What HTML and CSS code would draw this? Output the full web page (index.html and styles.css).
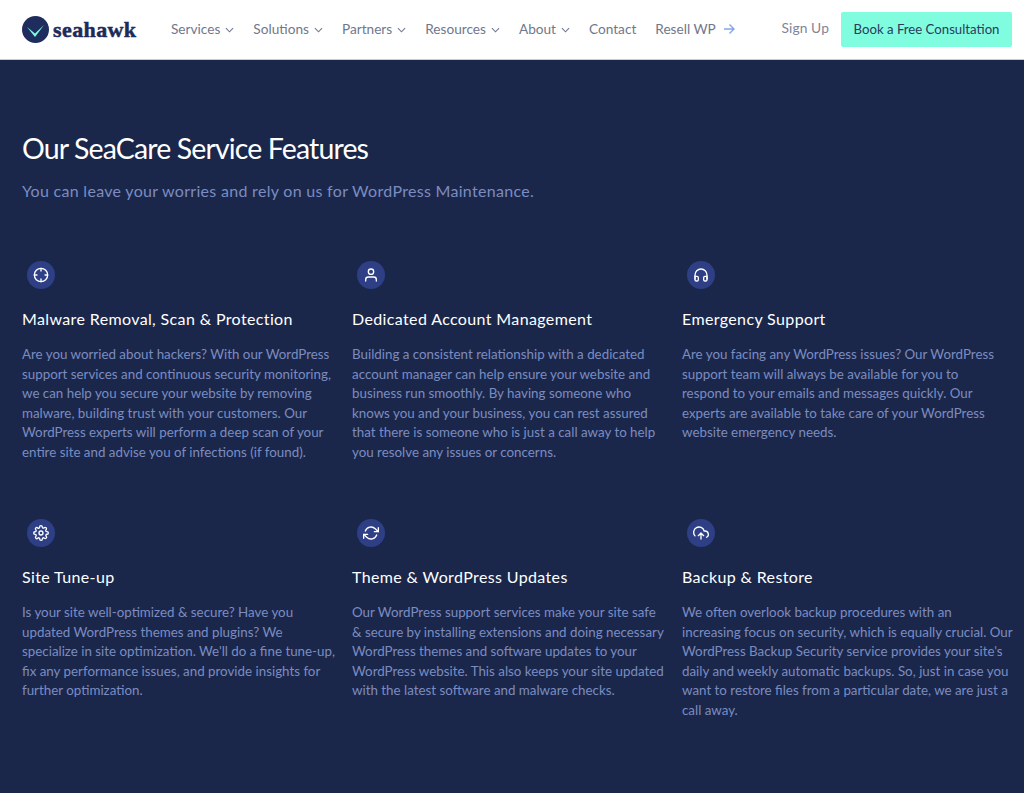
FILE: index.html
```html
<!DOCTYPE html>
<html lang="en">
<head>
<meta charset="utf-8">
<title>Seahawk</title>
<link rel="stylesheet" href="styles.css">
</head>
<body>
<header class="header">
  <a class="logo" href="#">
    <svg class="logo-mark" viewBox="0 0 27 27" width="27" height="27"><circle cx="13.5" cy="13.5" r="13.5" fill="#1f2d5e"/><path d="M5 11 L13 17.500 L22 9 L13 21 Z" fill="#7dfadf"/></svg>
    <span class="logo-text">seahawk</span>
  </a>
  <nav class="nav">
    <a class="nav-item" href="#">Services<svg class="chev" viewBox="0 0 10 6"><path d="M1 1l4 4 4-4"/></svg></a>
    <a class="nav-item" href="#">Solutions<svg class="chev" viewBox="0 0 10 6"><path d="M1 1l4 4 4-4"/></svg></a>
    <a class="nav-item" href="#">Partners<svg class="chev" viewBox="0 0 10 6"><path d="M1 1l4 4 4-4"/></svg></a>
    <a class="nav-item" href="#">Resources<svg class="chev" viewBox="0 0 10 6"><path d="M1 1l4 4 4-4"/></svg></a>
    <a class="nav-item" href="#">About<svg class="chev" viewBox="0 0 10 6"><path d="M1 1l4 4 4-4"/></svg></a>
    <a class="nav-item" href="#">Contact</a>
    <a class="nav-item" href="#">Resell WP<svg class="arrow" viewBox="0 0 12 12"><path d="M1 6h10M6.500 1.500L11 6l-4.500 4.500"/></svg></a>
  </nav>
  <div class="actions">
    <a class="signup" href="#">Sign Up</a>
    <a class="cta" href="#">Book a Free Consultation</a>
  </div>
</header>
<main class="main">
  <h1 class="title">Our SeaCare Service Features</h1>
  <p class="subtitle">You can leave your worries and rely on us for WordPress Maintenance.</p>
  <section class="grid">
    <article class="card">
      <div class="icon"><svg viewBox="0 0 24 24"><circle cx="12" cy="12" r="10"/><path d="M22 12h-4M6 12H2M12 6V2M12 22v-4"/></svg></div>
      <h2 class="card-title">Malware Removal, Scan &amp; Protection</h2>
      <p class="card-text">Are you worried about hackers? With our WordPress<br>support services and continuous security monitoring,<br>we can help you secure your website by removing<br>malware, building trust with your customers. Our<br>WordPress experts will perform a deep scan of your<br>entire site and advise you of infections (if found).</p>
    </article>
    <article class="card">
      <div class="icon"><svg viewBox="0 0 24 24"><path d="M20 21v-2a4 4 0 0 0-4-4H8a4 4 0 0 0-4 4v2"/><circle cx="12" cy="7" r="4"/></svg></div>
      <h2 class="card-title">Dedicated Account Management</h2>
      <p class="card-text">Building a consistent relationship with a dedicated<br>account manager can help ensure your website and<br>business run smoothly. By having someone who<br>knows you and your business, you can rest assured<br>that there is someone who is just a call away to help<br>you resolve any issues or concerns.</p>
    </article>
    <article class="card">
      <div class="icon"><svg viewBox="0 0 24 24"><path d="M3 18v-6a9 9 0 0 1 18 0v6"/><path d="M21 19a2 2 0 0 1-2 2h-1a2 2 0 0 1-2-2v-3a2 2 0 0 1 2-2h3zM3 19a2 2 0 0 0 2 2h1a2 2 0 0 0 2-2v-3a2 2 0 0 0-2-2H3z"/></svg></div>
      <h2 class="card-title">Emergency Support</h2>
      <p class="card-text">Are you facing any WordPress issues? Our WordPress<br>support team will always be available for you to<br>respond to your emails and messages quickly. Our<br>experts are available to take care of your WordPress<br>website emergency needs.</p>
    </article>
    <article class="card">
      <div class="icon"><svg viewBox="0 0 24 24"><circle cx="12" cy="12" r="3"/><path d="M19.4 15a1.65 1.65 0 0 0 .33 1.82l.06.06a2 2 0 0 1-2.83 2.83l-.06-.06a1.65 1.65 0 0 0-2.82 1.17V21a2 2 0 0 1-4 0v-.09A1.65 1.65 0 0 0 7.2 19.740l-.06.06a2 2 0 0 1-2.83-2.83l.06-.06a1.65 1.65 0 0 0-1.17-2.820H3a2 2 0 0 1 0-4h.09A1.65 1.65 0 0 0 4.260 7.200l-.06-.06a2 2 0 0 1 2.83-2.830l.06.06a1.65 1.65 0 0 0 2.820-1.170V3a2 2 0 0 1 4 0v.09a1.65 1.65 0 0 0 2.820 1.170l.06-.06a2 2 0 0 1 2.830 2.830l-.06.06a1.65 1.65 0 0 0 1.170 2.820H21a2 2 0 0 1 0 4h-.09a1.65 1.65 0 0 0-1.510 1z"/></svg></div>
      <h2 class="card-title">Site Tune-up</h2>
      <p class="card-text">Is your site well-optimized &amp; secure? Have you<br>updated WordPress themes and plugins? We<br>specialize in site optimization. We'll do a fine tune-up,<br>fix any performance issues, and provide insights for<br>further optimization.</p>
    </article>
    <article class="card">
      <div class="icon"><svg viewBox="0 0 24 24"><path d="M23 4v6h-6M1 20v-6h6"/><path d="M3.510 9a9 9 0 0 1 14.850-3.360L23 10M1 14l4.640 4.360A9 9 0 0 0 20.490 15"/></svg></div>
      <h2 class="card-title">Theme &amp; WordPress Updates</h2>
      <p class="card-text">Our WordPress support services make your site safe<br>&amp; secure by installing extensions and doing necessary<br>WordPress themes and software updates to your<br>WordPress website. This also keeps your site updated<br>with the latest software and malware checks.</p>
    </article>
    <article class="card">
      <div class="icon"><svg viewBox="0 0 24 24"><path d="M16 16l-4-4-4 4M12 12v9"/><path d="M20.390 18.390A5 5 0 0 0 18 9h-1.260A8 8 0 1 0 3 16.300"/></svg></div>
      <h2 class="card-title">Backup &amp; Restore</h2>
      <p class="card-text">We often overlook backup procedures with an<br>increasing focus on security, which is equally crucial. Our<br>WordPress Backup Security service provides your site's<br>daily and weekly automatic backups. So, just in case you<br>want to restore files from a particular date, we are just a<br>call away.</p>
    </article>
  </section>
</main>
</body>
</html>
```

FILE: styles.css
```css
* { box-sizing: border-box; }
html, body { margin: 0; padding: 0; }
body {
  width: 1024px;
  height: 793px;
  overflow: hidden;
  background: #1a274b;
  font-family: Lato, "Noto Sans", sans-serif;
}
a { text-decoration: none; color: inherit; }
.header {
  display: flex;
  align-items: center;
  height: 60px;
  padding: 0 12px 0 22px;
  background: #fff;
  border-bottom: 1px solid #c9ccd6;
}
.logo { display: flex; align-items: center; gap: 4px; width: 149px; flex: none; }
.logo-mark { flex: none; }
.logo-text {
  font-family: "Liberation Serif", serif;
  font-weight: 700;
  font-size: 22px;
  letter-spacing: 0.4px;
  color: #1c2b59;
  -webkit-text-stroke: 0.5px #1c2b59;
}
.nav { display: flex; align-items: center; gap: 19px; flex: 1; padding-bottom: 2px; font-size: 13.650px; color: #70778c; }
.nav-item { display: flex; align-items: center; gap: 5px; white-space: nowrap; }
.chev { width: 9px; height: 6px; margin-top: 2px; fill: none; stroke: #70778c; stroke-width: 1.2; }
.arrow { width: 12px; height: 12px; margin-left: 2px; fill: none; stroke: #85a5e5; stroke-width: 1.4; }
.actions { display: flex; align-items: center; gap: 12px; }
.signup { font-size: 13.800px; color: #7f8597; margin-top: -4px; letter-spacing: 0.1px; }
.cta {
  display: block;
  width: 171px;
  height: 35px;
  line-height: 35px;
  text-align: center;
  background: #80fcdf;
  border-radius: 2px;
  font-size: 13.200px;
  color: #2b3a5c;
  white-space: nowrap;
}
.main { padding: 69px 12px 0 22px; }
.title {
  margin: 0;
  font-size: 28.500px;
  line-height: 38px;
  font-weight: 400;
  letter-spacing: -0.870px;
  color: #fff;
}
.subtitle {
  margin: 12px 0 0;
  font-size: 16px;
  line-height: 24px;
  letter-spacing: 0.3px;
  color: #7c8cc0;
}
.grid {
  display: grid;
  grid-template-columns: repeat(3, 300px);
  column-gap: 30px;
  margin-top: 58px;
}
.card { height: 258px; }
.icon {
  width: 28px;
  height: 28px;
  margin-left: 5px;
  border-radius: 50%;
  background: #2e3f85;
  display: flex;
  align-items: center;
  justify-content: center;
}
.icon svg { width: 16px; height: 16px; fill: none; stroke: #fff; stroke-width: 2; stroke-linecap: round; stroke-linejoin: round; }
.card-title {
  margin: 18px 0 0;
  font-size: 16px;
  line-height: 24px;
  font-weight: 400;
  letter-spacing: 0.370px;
  color: #fff;
  white-space: nowrap;
}
.card-text {
  margin: 14px 0 0;
  font-size: 13.350px;
  line-height: 19.600px;
  color: #7c8cc0;
  white-space: nowrap;
}
```
